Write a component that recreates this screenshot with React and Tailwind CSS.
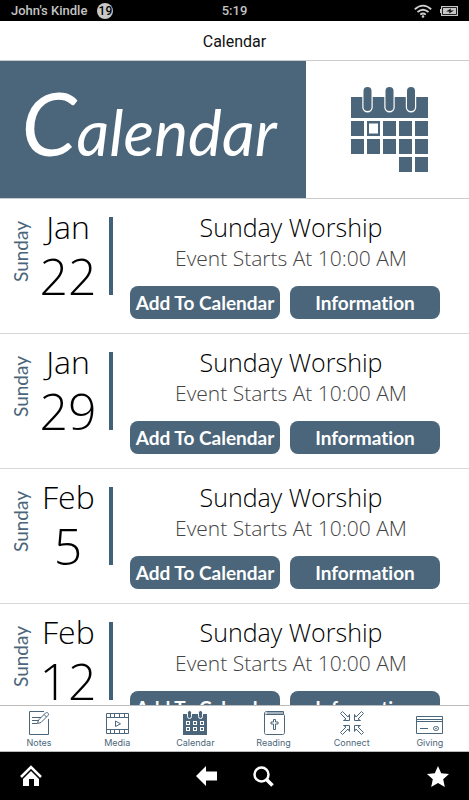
const EVENTS = [
  { month: 'Jan', day: '22' },
  { month: 'Jan', day: '29' },
  { month: 'Feb', day: '5' },
  { month: 'Feb', day: '12' },
]

const TABS = [
  { label: 'Notes', Icon: NotesIcon },
  { label: 'Media', Icon: MediaIcon },
  { label: 'Calendar', Icon: CalendarTabIcon },
  { label: 'Reading', Icon: ReadingIcon },
  { label: 'Connect', Icon: ConnectIcon },
  { label: 'Giving', Icon: GivingIcon },
]

function NotesIcon() {
  return (
    <svg className="h-7 w-7" viewBox="0 0 28 28" fill="none" stroke="#4b667a">
      <path d="M19 2.500H4.500v23h19V10" />
      <path d="M7 8.500h9M7 11.500h7M7 14.500h5" />
      <path d="M12.500 14.500l1-3.500 7-7c1.500-1.500 4 .5 2.500 2.500l-7 7zM19 5.500l2.500 2.500" />
    </svg>
  )
}

function MediaIcon() {
  return (
    <svg className="h-7 w-7" viewBox="0 0 28 28" fill="none" stroke="#4b667a">
      <path d="M3.500 4.500h22v20h-22zM3.500 8.500h22M3.500 20.500h22" />
      <path d="M7.500 4.500v4M11.500 4.500v4M16.500 4.500v4M21.500 4.500v4M7.500 20.500v4M11.500 20.500v4M16.500 20.500v4M21.500 20.500v4" />
      <path d="M12.500 12v5.500l5-2.700z" />
    </svg>
  )
}

function CalendarTabIcon() {
  return (
    <svg className="h-7 w-7" viewBox="0 0 28 28">
      <path d="M2 5h24v21H2z" fill="#4b667a" />
      <g fill="#4b667a" stroke="#fff">
        {[6.5, 17.5].map((x) => (
          <rect key={x} x={x} y="1.500" width="4" height="8" rx="2" />
        ))}
      </g>
      <g fill="#4b667a" stroke="#fff">
        {[5.5, 12.5, 19.5].map((x) => (
          <g key={x}>
            <rect x={x} y="12.500" width="3" height="3" />
            <rect x={x} y="18.500" width="3" height="3" />
          </g>
        ))}
      </g>
    </svg>
  )
}

function ReadingIcon() {
  return (
    <svg className="h-7 w-7" viewBox="0 0 28 28" fill="none" stroke="#4b667a">
      <path d="M23.500 5.500v-3H6.500c-1.500 0-2 1-2 2v19c0 1 .5 2 2 2h16c1 0 2-.5 2-2v-17c0-.5-.5-1-1-1h-17c-1 0-2-.5-2-1.500M6.500 4h17" />
      <path d="M13.500 10.500h2v2.500h2.500v2h-2.500v5.500h-2V15H11v-2h2.500z" />
    </svg>
  )
}

function ConnectIcon() {
  const arrow = 'M2.500 4.500l2-2 5.500 5.500 1.500-2.500v6H5.500l2.500-1.500z'
  return (
    <svg className="h-7 w-7" viewBox="0 0 28 28" fill="none" stroke="#4b667a">
      {[0, 90, 180, 270].map((angle) => (
        <path key={angle} d={arrow} transform={`rotate(${angle} 14 14)`} />
      ))}
    </svg>
  )
}

function GivingIcon() {
  return (
    <svg className="h-7 w-7" viewBox="0 0 28 28" fill="none" stroke="#4b667a">
      <path d="M.5 7.500h26v17H.5zM.5 10.500h26M.5 12.500h26M4 19.500h8" />
      <rect x="17.500" y="17.500" width="5" height="4" rx="2" />
      <path d="M19 20l2-1" />
    </svg>
  )
}

function StatusBar() {
  return (
    <header className="relative flex h-[21px] shrink-0 items-center justify-between bg-black pr-[11px] pl-[11px] font-['Roboto',sans-serif] text-[13px] font-medium text-[#c4c4c4]">
      <div className="flex items-center gap-[10px]">
        <span>John's Kindle</span>
        <span className="flex size-4 items-center justify-center rounded-full bg-[#c8c8c8] text-xs text-black">
          19
        </span>
      </div>
      <time className="absolute left-1/2 -translate-x-1/2">5:19</time>
      <div className="flex items-center gap-2">
        <svg className="h-[14px] w-[18px]" viewBox="0 0 18 14" fill="none" stroke="#d0d0d0" strokeWidth="1.8">
          <path d="M.8 5.200q8.200-7.200 16.400 0M3.500 8q5.500-4.600 11 0M6.200 10.600q2.800-2.200 5.600 0" />
          <circle cx="9" cy="12.500" r="1.300" fill="#d0d0d0" stroke="none" />
        </svg>
        <svg className="h-[10px] w-[18px]" viewBox="0 0 18 10">
          <path d="M1 0h17v10H1V7H0V3h1z" fill="#c8c8c8" />
          <path d="M2.500 1.500h14v7h-14z" fill="none" stroke="#222" />
          <path d="M6 5.500l5-3-.5 2H14l-5 3 .5-2z" fill="#111" />
        </svg>
      </div>
    </header>
  )
}

function Banner() {
  return (
    <section className="flex h-[139px] shrink-0 border-y border-[#ccc]">
      <div className="flex w-[65.25%] items-center justify-center bg-[#4b667a] pr-2 pb-4">
        <h2 className="font-['Lato',cursive] text-[64px] leading-none font-normal text-white italic first-letter:text-[88px]">
          Calendar
        </h2>
      </div>
      <div className="flex flex-1 items-center justify-center pl-1">
        <svg className="h-[85px] w-[77px]" viewBox="0 0 77 85" fill="#4b667a">
          <path d="M0 10h77v21H0z" />
          {[12.5, 34.5, 56].map((x) => (
            <g key={x}>
              <rect x={x - 1.2} y="-1" width="10.400" height="26.500" rx="5.200" fill="#fff" />
              <rect x={x} y="0" width="8" height="24" rx="4" />
            </g>
          ))}
          {[0, 16, 32, 48, 64].map((x) => (
            <g key={x}>
              <rect x={x} y="34" width="13" height="15" />
              <rect x={x} y="52" width="13" height="15" />
              {x > 40 && <rect x={x} y="70" width="13" height="15" />}
            </g>
          ))}
          <rect x="18" y="36.500" width="9" height="10" fill="#fff" />
        </svg>
      </div>
    </section>
  )
}

function EventButton({ children }) {
  return (
    <button
      type="button"
      className="h-[33px] w-[150px] rounded-lg bg-[#4b667a] pt-px font-['Century_Gothic','Lato',sans-serif] text-[19px] font-bold whitespace-nowrap text-white [font-variant-ligatures:none]"
    >
      {children}
    </button>
  )
}

function EventRow({ month, day }) {
  return (
    <li className="flex h-[135px] border-b border-[#d8d8d8]">
      <div className="mt-3 flex h-20 w-[42px] items-center justify-center">
        <span className="rotate-180 font-['Century_Gothic','Lato',sans-serif] text-[19px] font-normal text-[#4b667a] [writing-mode:vertical-rl]">
          Sunday
        </span>
      </div>
      <div className="w-[52px] pt-2 text-center whitespace-nowrap">
        <p className="text-[32px] leading-10">{month}</p>
        <p className="-mx-2 text-[50px] leading-[58px]">{day}</p>
      </div>
      <div className="mt-[18px] ml-[15px] h-[78px] w-1 bg-[#416179]" />
      <div className="flex flex-1 flex-col items-center pt-3 whitespace-nowrap">
        <h3 className="text-[25px] leading-8">Sunday Worship</h3>
        <p className="text-[21px] leading-[30px] text-[#444]">Event Starts At 10:00 AM</p>
        <div className="mt-[13px] flex gap-[10px] pr-3">
          <EventButton>Add To Calendar</EventButton>
          <EventButton>Information</EventButton>
        </div>
      </div>
    </li>
  )
}

function TabBar() {
  return (
    <nav className="grid h-[47px] shrink-0 grid-cols-6 border-y border-[#bbb] bg-white font-['Inter',sans-serif] text-[9px] leading-3 font-normal text-[#4b667a]">
      {TABS.map(({ label, Icon }) => (
        <a key={label} href="#" className="flex flex-col items-center pt-[3px]">
          <Icon />
          <span>{label}</span>
        </a>
      ))}
    </nav>
  )
}

function SystemNav() {
  return (
    <nav className="flex h-12 shrink-0 items-center justify-between bg-black px-5">
      <button type="button" aria-label="Home">
        <svg className="h-[22px] w-[22px]" viewBox="0 0 22 22" fill="none">
          <path d="M1 12L11 2l10 10" stroke="#fff" strokeWidth="2.500" />
          <path d="M3 14l8-8 8 8v7h-5v-7H9v7H3z" fill="#fff" />
        </svg>
      </button>
      <div className="flex items-center gap-9">
        <button type="button" aria-label="Back">
          <svg className="h-5 w-[21px]" viewBox="0 0 21 20" fill="#fff">
            <path d="M0 10L10 0v5.500h11v9H10V20z" />
          </svg>
        </button>
        <button type="button" aria-label="Search">
          <svg className="h-[21px] w-[21px]" viewBox="0 0 21 21" fill="none" stroke="#fff">
            <circle cx="8.500" cy="8.500" r="7" strokeWidth="2.500" />
            <path d="M13.500 13.500l6 6" strokeWidth="3.500" />
          </svg>
        </button>
      </div>
      <button type="button" aria-label="Favorites">
        <svg className="h-[21px] w-[22px]" viewBox="0 0 22 21" fill="#fff">
          <path d="M11 0l3.200 7.200 7.800.8-5.800 5.300 1.600 7.700L11 17l-6.800 4 1.600-7.700L0 8l7.800-.8z" />
        </svg>
      </button>
    </nav>
  )
}

function App() {
  return (
    <div className="flex h-screen flex-col overflow-hidden bg-white font-['Open_Sans',sans-serif] font-light text-black">
      <StatusBar />
      <h1 className="flex h-[39px] shrink-0 items-center justify-center pt-[2px] font-['Roboto',sans-serif] text-base font-normal text-[#111]">
        Calendar
      </h1>
      <Banner />
      <main className="min-h-0 flex-1 overflow-hidden">
        <ul>
          {EVENTS.map((event) => (
            <EventRow key={event.month + event.day} {...event} />
          ))}
        </ul>
      </main>
      <TabBar />
      <SystemNav />
    </div>
  )
}

export default App
